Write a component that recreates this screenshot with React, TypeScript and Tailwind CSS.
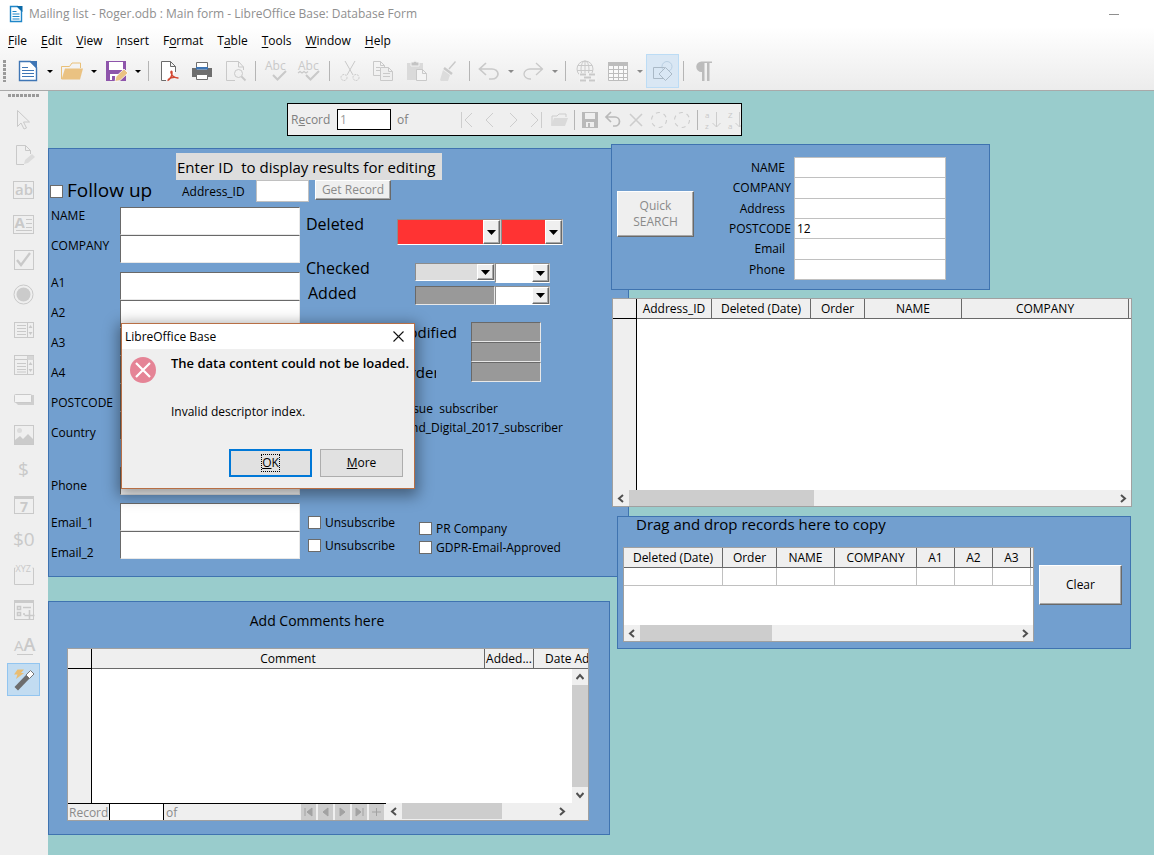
import type { ReactNode } from "react";

/* ---------- toolbar icons (24 x 24 grid) ---------- */

function Icon({ children, size = 24 }: { children: ReactNode; size?: number }) {
  return (
    <svg width={size} height={size} viewBox="0 0 24 24" fill="none" stroke="#c9c9c9" strokeWidth="1" aria-hidden="true" className="shrink-0 overflow-visible">
      {children}
    </svg>
  );
}

const glyph = { stroke: "none", fill: "#c9c9c9", fontFamily: "'Open Sans', sans-serif" };

const WriterDoc = () => (
  <Icon>
    <path d="M3.500 2.500h11l6 6v13h-17z" stroke="#3f76b5" strokeWidth="1.400" fill="#fff" />
    <path d="M13 2h8v8z" fill="#3f76b5" stroke="none" />
    <path d="M6 8.500h6M6 11.500h12M6 14.500h12M6 17.500h12" stroke="#3f76b5" strokeWidth="1.100" />
  </Icon>
);

const BaseDoc = () => (
  <svg width="14" height="18" viewBox="0 0 14 18" aria-hidden="true" className="shrink-0">
    <path d="M1.500 1.500h7l4 4v11h-11z" fill="#fff" stroke="#1f86c8" strokeWidth="1.400" />
    <path d="M7.500 1h6v6z" fill="#0b6aa8" />
    <path d="M3.500 6.500h4M3.500 9h7M3.500 11.500h7M3.500 14h7" stroke="#1f86c8" strokeWidth="1.200" />
  </svg>
);

const FolderIcon = () => (
  <Icon>
    <path d="M1.500 20V7.500h8l2.500-3.500h8.500v5" stroke="#e9c078" />
    <path d="M5 9.500h18l-3 11H1.500z" fill="#eac282" stroke="none" />
  </Icon>
);

const SaveIcon = () => (
  <Icon>
    <path d="M2 2h20v20H2z" fill="#8e55ab" stroke="none" />
    <path d="M5 3h14v8H5zM6 15h10v6H6z" fill="#fff" stroke="none" />
    <path d="M8 17h3v5H8z" fill="#8e55ab" stroke="none" />
    <path d="M11 22.500l1-5 8-7.500 4 4-8 7.500z" fill="#eac282" stroke="#fff" strokeWidth=".8" />
  </Icon>
);

const PdfIcon = () => (
  <Icon>
    <path d="M9 21.500H4.500v-19h9l5 5V13M13.500 2.500v5h5" stroke="#6b6b6b" fill="#fff" />
    <path d="M10.500 21.500c3-1.500 5-5.500 4.500-8.500-.3-1.500-1.500-.8-1 .8.800 3 3.500 5.200 7.500 5.200M11 20.500c3-2 7-2.500 10-1.500" stroke="#d2452f" strokeWidth="1.400" />
  </Icon>
);

const PrintIcon = () => (
  <Icon>
    <path d="M2 9h20v9H2z" fill="#6e6e6e" stroke="none" />
    <path d="M6.500 3.500h11V11h-11z" fill="#fff" stroke="#6e6e6e" />
    <path d="M6 8h12v2.500H6z" fill="#3f76b5" stroke="none" />
    <path d="M6.500 15.500h11v5h-11z" fill="#fff" stroke="#6e6e6e" />
  </Icon>
);

const PreviewIcon = () => (
  <Icon>
    <path d="M20.500 11V8l-5-5.500h-12v19H12M15.500 2.500V8h5" />
    <circle cx="15.500" cy="14.500" r="4" />
    <path d="M18.500 17.500l4 4" strokeWidth="1.800" />
  </Icon>
);

const SpellIcon = ({ wavy = false }: { wavy?: boolean }) => (
  <Icon>
    <text x="1" y="11" fontSize="12" {...glyph}>Abc</text>
    {wavy && <path d="M1 14l2-1.500 2 1.500 2-1.500 2 1.500 2-1.500" strokeWidth="1.300" />}
    <path d="M9 16l4.500 4.500L22 12" strokeWidth="2" />
  </Icon>
);

const CutIcon = () => (
  <Icon>
    <path d="M7 2l8 14M17 2L9 16" />
    <circle cx="6" cy="18.500" r="3" strokeDasharray="2 1" />
    <circle cx="18" cy="18.500" r="3" strokeDasharray="2 1" />
  </Icon>
);

const CopyIcon = () => (
  <Icon>
    <path d="M9 16.500H2.500v-14h7l4 4V8M9.500 2.500v4h4M5 8.500h4M5 11.500h4" />
    <path d="M9.500 8.500h8l4 4v9h-12zM17.500 8.500v4h4M12 14.500h7M12 17.500h7" fill="#eee" />
  </Icon>
);

const PasteIcon = () => (
  <Icon>
    <path d="M3 4h16v17H3z" fill="#dadada" stroke="none" />
    <path d="M7 4V3h2.500a1.800 1.800 0 013 0H15v4H7z" fill="#c4c4c4" stroke="#f2f2f2" />
    <path d="M12.500 10.500h6l4 4v7h-10zM18.500 10.500v4h4" fill="#f4f4f4" />
  </Icon>
);

const BrushIcon = () => (
  <Icon>
    <path d="M18.500 2.500L12 10" strokeWidth="1.400" />
    <path d="M7 9l8 6" strokeWidth="2.500" />
    <path d="M6 11l7 5-2 6H4l-1-1z" fill="#dcdcdc" stroke="none" />
  </Icon>
);

const UndoIcon = () => (
  <Icon>
    <path d="M9 4L2.500 10 9 16M2.500 10H15a6 5 0 010 10h-3" strokeWidth="1.700" />
  </Icon>
);

const RedoIcon = () => (
  <Icon>
    <path d="M15 4l6.500 6-6.500 6M21.500 10H9a6 5 0 000 10h1" strokeWidth="1.300" />
  </Icon>
);

const LinkIcon = () => (
  <Icon>
    <circle cx="11" cy="10" r="8" />
    <ellipse cx="11" cy="10" rx="4" ry="8" />
    <path d="M4 6.500h14M3 11.500h16M11 2v14" />
    <path d="M5 14h18v9H5z" fill="#f2f2f2" stroke="none" />
    <path d="M6 15.500h6M15 15.500h6M10 18.500h7M6 21.500h6M15 21.500h6" strokeWidth="1.800" />
  </Icon>
);

const TableIcon = () => (
  <Icon>
    <path d="M2.500 3.500h19v18h-19zM2.500 10.500h19M2.500 14.500h19M2.500 18.500h19M7.500 6v15M12.500 6v15M17.500 6v15" stroke="#bdbdbd" fill="#fafafa" />
    <path d="M2 3h20v4H2z" fill="#bdbdbd" stroke="none" />
  </Icon>
);

const ShapesIcon = () => (
  <Icon>
    <circle cx="16" cy="7.500" r="5" stroke="#b9cfe2" />
    <path d="M2.500 8.500h11v11h-11z" stroke="#aab9c6" />
    <path d="M14.500 8.500l6.500 6.500-6.500 6.500L8 15z" stroke="#aab9c6" fill="#d9e7f4" />
  </Icon>
);

const PilcrowIcon = () => (
  <Icon>
    <path d="M20 2.500H9.500a5 5 0 000 10.500H10v9h2.500V4H15v18h2.500V4H20z" fill="#bcbcbc" stroke="none" />
  </Icon>
);

/* ---------- form control palette ---------- */

const palette: { label: string; icon: ReactNode; active?: boolean }[] = [
  { label: "Select", icon: <Icon><path d="M5.500 2.500l12 11.500h-6l3 6-2.500 1-3-6-3.500 3.500z" /></Icon> },
  {
    label: "Design Mode",
    icon: (
      <Icon>
        <path d="M18.500 11V7.500l-5-5h-9v19H12M13.500 2.500v5h5" />
        <path d="M12 21l1-4 7-6 3 3-7 6z" fill="#dcdcdc" stroke="none" />
      </Icon>
    ),
  },
  { label: "Label Field", icon: <Icon><rect x="1.500" y="3.500" width="20" height="17" /><text x="3" y="17" fontSize="15" fontWeight="600" {...glyph}>ab</text></Icon> },
  {
    label: "Text Box",
    icon: (
      <Icon>
        <rect x="1.500" y="2.500" width="20" height="18" />
        <text x="2.500" y="15" fontSize="15" fontWeight="700" {...glyph}>A</text>
        <path d="M14 6.500h6M14 10.500h6M14 14.500h6M4 17.500h16" strokeWidth="1.200" />
      </Icon>
    ),
  },
  { label: "Check Box", icon: <Icon><rect x="2.500" y="2.500" width="19" height="19" /><path d="M5 12l4 5 9-12" strokeWidth="2.300" /></Icon> },
  { label: "Option Button", icon: <Icon><circle cx="11.500" cy="11.500" r="9.500" /><circle cx="11.500" cy="11.500" r="7" fill="#cbcbcb" stroke="none" /></Icon> },
  {
    label: "List Box",
    icon: <Icon><rect x="2.500" y="4.500" width="19" height="15" /><path d="M15.500 4.500v15M5 7.500h9M5 10.500h9M5 13.500h9M5 16.500h9" /><path d="M16.500 10h4l-2-3zM16.500 14h4l-2 3z" fill="#c9c9c9" stroke="none" /></Icon>,
  },
  {
    label: "Combo Box",
    icon: <Icon><rect x="2.500" y="2.500" width="19" height="19" /><path d="M15.500 2.500v19M2.500 6.500h13M5 10.500h9M5 13.500h9M5 16.500h9M5 19h9" /><path d="M15.500 3h6v4h-6z" fill="#d6d6d6" stroke="none" /><path d="M16.500 12h4l-2-3zM16.500 16h4l-2 3z" fill="#c9c9c9" stroke="none" /></Icon>,
  },
  { label: "Push Button", icon: <Icon><path d="M5 7h17v10H6l-2-2z" fill="#cfcfcf" stroke="none" /><rect x="2.500" y="6.500" width="17" height="8" rx="1" fill="#f3f3f3" /></Icon> },
  { label: "Image Control", icon: <Icon><rect x="2.500" y="2.500" width="19" height="19" /><circle cx="7.500" cy="7.500" r="2.500" fill="#dcdcdc" stroke="none" /><path d="M3 21v-4l5-4 3 3 5-5 5 5v5z" fill="#cbcbcb" stroke="none" /></Icon> },
  { label: "Currency Field", icon: <Icon><text x="6" y="18" fontSize="19" {...glyph}>$</text></Icon> },
  { label: "Date Field", icon: <Icon><rect x="2.500" y="3.500" width="19" height="17" /><path d="M2 3h20v3H2z" fill="#cbcbcb" stroke="none" /><text x="8" y="19" fontSize="14" fontWeight="700" {...glyph}>7</text></Icon> },
  { label: "Formatted Field", icon: <Icon><text x="1" y="18" fontSize="19" {...glyph}>$0</text></Icon> },
  { label: "Group Box", icon: <Icon><path d="M3.500 5H2.500v16.500h19V5h-1" /><text x="3.500" y="9" fontSize="9" {...glyph}>XYZ</text></Icon> },
  {
    label: "More Controls",
    icon: <Icon><rect x="2.500" y="2.500" width="19" height="19" /><path d="M2 2h20v3H2z" fill="#cbcbcb" stroke="none" /><path d="M5.500 8.500h3v3h-3zM5.500 14.500h3v3h-3zM11 9.500h8M11 16h2M17.500 12v10M12.500 17.500h10" strokeWidth="1.600" /></Icon>,
  },
  { label: "Form Design", icon: <Icon><text x="2" y="18" {...glyph}><tspan fontSize="15">A</tspan><tspan fontSize="18" fontWeight="600">A</tspan></text><path d="M5 21.500h16" /></Icon> },
  {
    label: "Toggle Wizards",
    active: true,
    icon: (
      <Icon>
        <path d="M5.500 1.500H12L9 5h3l-8 6 1.500-4.500H2z" fill="#e9bd73" stroke="none" />
        <path d="M2.500 19L14 7l3.500 3.500L6 22.500z" fill="#6d6d6d" stroke="none" />
        <path d="M14 7l4.500-4.500L22 6l-4.500 4.500z" fill="#fff" stroke="#777" />
      </Icon>
    ),
  },
];

/* ---------- small shared pieces ---------- */

const Sep = () => (
  <span className="flex w-2 shrink-0 justify-center">
    <span className="h-5 w-px bg-[#b5b5b5]" />
  </span>
);

function Tool({ label, children, active = false, wide = true }: { label: string; children: ReactNode; active?: boolean; wide?: boolean }) {
  return (
    <button
      type="button"
      aria-label={label}
      className={`flex h-[34px] shrink-0 items-center justify-center ${wide ? "w-[33px]" : "w-8"} ${active ? "border border-[#bcdcf5] bg-[#d9e7f4]" : ""}`}
    >
      {children}
    </button>
  );
}

function DropArrow({ label, dim = false }: { label: string; dim?: boolean }) {
  return (
    <button type="button" aria-label={label} className="flex h-[34px] w-3 shrink-0 items-center justify-center">
      <svg width="6" height="3" viewBox="0 0 6 3" aria-hidden="true">
        <path d="M0 0h6L3 3z" fill={dim ? "#8a8a8a" : "#000"} />
      </svg>
    </button>
  );
}

const sunken = "border border-t-[#696969] border-l-[#696969] border-r-[#e8e8e8] border-b-[#e8e8e8]";
const raised = "border border-t-white border-l-white border-r-[#696969] border-b-[#696969] bg-[#efefef] shadow-[inset_-1px_-1px_0_#a8a8a8]";

function Combo({ label, box, fill }: { label: string; box: string; fill: string }) {
  return (
    <div className={`relative flex border border-t-[#8c8c8c] border-l-[#8c8c8c] border-r-[#c8c8c8] border-b-white ${box} ${fill}`}>
      <select aria-label={label} className="min-w-0 flex-1 appearance-none bg-transparent" />
      <span className={`pointer-events-none absolute inset-y-0 right-0 flex w-[17px] items-center justify-center ${raised}`}>
        <svg width="9" height="5" viewBox="0 0 9 5" aria-hidden="true">
          <path d="M0 0h9L4.500 5z" fill="#000" />
        </svg>
      </span>
    </div>
  );
}

const chevrons = { left: "M6 1L2 4.500 6 8", right: "M2 1l4 3.500L2 8", up: "M.500 6L4 2l3.500 4", down: "M.500 2L4 6l3.500-4" };

function ScrollArrow({ dir }: { dir: keyof typeof chevrons }) {
  return (
    <button type="button" aria-label={`Scroll ${dir}`} className="flex size-4 shrink-0 items-center justify-center">
      <svg width="8" height="9" viewBox="0 0 8 9" fill="none" stroke="#505050" strokeWidth="2" aria-hidden="true">
        <path d={chevrons[dir]} />
      </svg>
    </button>
  );
}

function HScroll({ thumb }: { thumb: string }) {
  return (
    <div className="flex h-4 min-w-0 flex-1 bg-[#efefef]">
      <ScrollArrow dir="left" />
      <div className="flex min-w-0 flex-1">
        <div className={`bg-[#cdcdcd] ${thumb}`} />
      </div>
      <ScrollArrow dir="right" />
    </div>
  );
}

function Check({ label, text = "text-xs", box = "" }: { label: string; text?: string; box?: string }) {
  return (
    <label className={`flex items-center gap-1 whitespace-nowrap ${text} ${box}`}>
      <input type="checkbox" className="size-[13px] shrink-0 appearance-none border border-[#6b6b6b] bg-white" />
      {label}
    </label>
  );
}

/* ---------- window chrome ---------- */

const menus: [string, string, string][] = [
  ["", "F", "ile"], ["", "E", "dit"], ["", "V", "iew"], ["", "I", "nsert"], ["F", "o", "rmat"],
  ["T", "a", "ble"], ["", "T", "ools"], ["", "W", "indow"], ["", "H", "elp"],
];

function Chrome() {
  return (
    <header className="border-b border-[#a9a9a9] bg-linear-to-b from-white from-30% to-[#ececec]">
      <div className="flex h-7 items-center gap-1.5 pr-[35px] pl-[9px] text-[#8f8f8f]">
        <BaseDoc />
        <h1 className="flex-1 text-xs">Mailing list - Roger.odb : Main form - LibreOffice Base: Database Form</h1>
        <button type="button" aria-label="Minimise" className="h-px w-2.5 bg-[#8f8f8f]" />
      </div>
      <nav className="flex h-[26px] items-center gap-3.5 pl-2">
        {menus.map(([a, key, b]) => (
          <button type="button" key={a + key + b}>
            {a}
            <u className="underline-offset-2">{key}</u>
            {b}
          </button>
        ))}
      </nav>
      <div className="flex h-9 items-start pl-[3px]">
        <span className="mt-1.5 mr-1.5 h-[22px] w-[3px] shrink-0 bg-[repeating-linear-gradient(#9a9a9a_0_3px,transparent_3px_4px)]" />
        <Tool label="New" wide={false}><WriterDoc /></Tool>
        <DropArrow label="New options" />
        <Tool label="Open" wide={false}><FolderIcon /></Tool>
        <DropArrow label="Open options" />
        <Tool label="Save" wide={false}><SaveIcon /></Tool>
        <DropArrow label="Save options" />
        <div className="flex h-[34px] items-center">
          <Sep />
          <Tool label="Export as PDF"><PdfIcon /></Tool>
          <Tool label="Print"><PrintIcon /></Tool>
          <Tool label="Print Preview"><PreviewIcon /></Tool>
          <Sep />
          <Tool label="Spelling"><SpellIcon /></Tool>
          <Tool label="Automatic Spell Checking"><SpellIcon wavy /></Tool>
          <Sep />
          <Tool label="Cut"><CutIcon /></Tool>
          <Tool label="Copy"><CopyIcon /></Tool>
          <Tool label="Paste"><PasteIcon /></Tool>
          <Tool label="Clone Formatting"><BrushIcon /></Tool>
          <Sep />
          <Tool label="Undo" wide={false}><UndoIcon /></Tool>
          <DropArrow label="Undo options" dim />
          <Tool label="Redo" wide={false}><RedoIcon /></Tool>
          <DropArrow label="Redo options" dim />
          <Sep />
          <Tool label="Hyperlink"><LinkIcon /></Tool>
          <Tool label="Table" wide={false}><TableIcon /></Tool>
          <DropArrow label="Table options" dim />
          <Tool label="Show Draw Functions" active><ShapesIcon /></Tool>
          <Sep />
          <Tool label="Formatting Marks"><PilcrowIcon /></Tool>
        </div>
      </div>
    </header>
  );
}

function Palette() {
  return (
    <aside className="w-12 shrink-0 bg-[#efefef] pt-[3px] pl-[7px]">
      <div className="mb-1.5 ml-px h-[3px] w-8 bg-[repeating-linear-gradient(90deg,#9a9a9a_0_3px,transparent_3px_4px)]" />
      <div className="flex flex-col gap-0.5">
        {palette.map((p) => (
          <button
            type="button"
            key={p.label}
            aria-label={p.label}
            className={`flex size-[33px] items-center justify-center ${p.active ? "border border-[#92c5f0] bg-[#c2dcf1]" : ""}`}
          >
            {p.icon}
          </button>
        ))}
      </div>
    </aside>
  );
}

/* ---------- record navigation bar ---------- */

function NavIcon({ label, children }: { label: string; children: ReactNode }) {
  return (
    <button type="button" aria-label={label} className="flex h-6 w-[23px] shrink-0 items-center justify-center">
      <svg width="20" height="20" viewBox="0 0 20 20" fill="none" stroke="#cdcdcd" aria-hidden="true" className="overflow-visible">
        {children}
      </svg>
    </button>
  );
}

function RecordBar() {
  return (
    <div className="ml-[239px] flex h-[33px] w-[455px] items-center overflow-hidden border border-black bg-[#efefef] text-[#808080]">
      <label htmlFor="record" className="w-[49px] shrink-0 pl-[3px]">R<u>e</u>cord</label>
      <input id="record" defaultValue="1" className="h-[21px] w-[54px] shrink-0 border border-black bg-white px-0.5 text-[#999]" />
      <span className="w-16 shrink-0 pl-1.5">of</span>
      <NavIcon label="First Record"><path d="M4.500 2v16M15 3L8 10l7 7" /></NavIcon>
      <NavIcon label="Previous Record"><path d="M13 3l-7 7 7 7" /></NavIcon>
      <NavIcon label="Next Record"><path d="M7 3l7 7-7 7" /></NavIcon>
      <NavIcon label="Last Record"><path d="M5 3l7 7-7 7M15.500 2v16" /></NavIcon>
      <NavIcon label="New Record"><path d="M3 15V6h5l2-2h7v3" /><path d="M5 8h14l-3 8H2z" fill="#dadada" stroke="none" /></NavIcon>
      <Sep />
      <NavIcon label="Save Record"><path d="M2 2h16v16H2z" fill="#b9b9b9" stroke="none" /><path d="M5 3h10v6H5zM6 12h8v5H6z" fill="#efefef" stroke="none" /><path d="M8 13h2v4H8z" fill="#b9b9b9" stroke="none" /></NavIcon>
      <NavIcon label="Undo Data Entry"><path d="M8 2L3 7l5 5M3 7h9a4.500 4.500 0 010 9h-2" stroke="#b9b9b9" strokeWidth="1.700" /></NavIcon>
      <NavIcon label="Delete Record"><path d="M4 4l12 12M16 4L4 16" strokeWidth="1.600" /></NavIcon>
      <NavIcon label="Refresh"><circle cx="10" cy="10" r="7.500" strokeDasharray="4 4" strokeWidth="1.100" /></NavIcon>
      <NavIcon label="Refresh Control"><circle cx="10" cy="10" r="7.500" strokeDasharray="4 4" strokeWidth="1.100" /></NavIcon>
      <Sep />
      <NavIcon label="Sort Ascending"><text x="2" y="8" fontSize="8" {...glyph}>a</text><text x="2" y="19" fontSize="8" {...glyph}>z</text><path d="M13.500 2v15M9.500 13l4 4 4-4" /></NavIcon>
      <NavIcon label="Sort Descending"><text x="2" y="8" fontSize="8" {...glyph}>Z</text><text x="2" y="19" fontSize="8" {...glyph}>a</text><path d="M13.500 2v15M9.500 13l4 4 4-4" /></NavIcon>
    </div>
  );
}

/* ---------- address form ---------- */

const addressFields = [
  { label: "NAME", lead: "", space: "" },
  { label: "COMPANY", lead: "", space: "" },
  { label: "A1", lead: "mt-[7px]", space: "mt-[9px]" },
  { label: "A2", lead: "", space: "" },
  { label: "A3", lead: "", space: "" },
  { label: "A4", lead: "", space: "" },
  { label: "POSTCODE", lead: "", space: "" },
  { label: "Country", lead: "", space: "" },
  { label: "Phone", lead: "mt-[23px]", space: "mt-[27px]" },
  { label: "Email_1", lead: "mt-[7px]", space: "mt-2" },
  { label: "Email_2", lead: "", space: "" },
];

const panel = "border border-[#3f73b0] bg-[#729fcf]";

function AddressForm() {
  return (
    <section className={`w-[581px] pt-1 pb-2 ${panel}`}>
      <h2 className="ml-[127px] h-[27px] w-[266px] bg-[#dddddd] px-px text-[15px] leading-[28px] whitespace-pre">Enter ID  to display results for editing</h2>
      <div className="flex h-[22px] items-start">
        <Check label="Follow up" text="text-[19px]" box="h-[22px] w-[133px] pl-px" />
        <label htmlFor="address-id" className="w-[74px] leading-6">Address_ID</label>
        <input id="address-id" className="h-[22px] w-[53px] border border-[#c0c0c0] bg-white" />
        <button type="button" className={`ml-1.5 h-5 w-[76px] leading-[18px] text-[#8a8a8a] ${raised}`}>Get Record</button>
      </div>
      <div className="flex">
        <div className="-mt-px flex w-[71px] flex-col pl-0.5">
          {addressFields.map((f) => (
            <label key={f.label} htmlFor={f.label} className={`h-[30px] leading-[30px] ${f.lead}`}>{f.label}</label>
          ))}
        </div>
        <div className="flex w-[180px] flex-col pt-[5px]">
          {addressFields.map((f) => (
            <input key={f.label} id={f.label} className={`h-7 w-full bg-white ${sunken} ${f.space}`} />
          ))}
        </div>
        <div className="ml-1.5 flex flex-1 flex-col pt-[17px]">
          <div className="flex h-[26px] items-start">
            <span className="w-[91px] text-base leading-[10px]">Deleted</span>
            <Combo label="Deleted by" box="h-[26px] w-[104px]" fill="bg-[#ff3333]" />
            <Combo label="Deleted date" box="h-[26px] w-[62px]" fill="bg-[#ff3333]" />
          </div>
          <div className="mt-[18px] flex h-5 items-start">
            <span className="w-[109px] text-base leading-[10px]">Checked</span>
            <Combo label="Checked by" box="h-[18px] w-20" fill="bg-[#dddddd]" />
            <Combo label="Checked date" box="h-5 w-[55px]" fill="bg-white" />
          </div>
          <div className="mt-[3px] flex h-[19px] items-start">
            <span className="w-[109px] pl-0.5 text-base leading-[14px]">Added</span>
            <input aria-label="Added by" className={`h-[19px] w-20 bg-[#999999] ${sunken}`} />
            <Combo label="Added date" box="h-[19px] w-[55px]" fill="bg-white" />
          </div>
          <div className="mt-[17px] flex text-[15px] leading-5">
            <div className="flex w-[165px] flex-col justify-between">
              <span className="w-[151px] text-right">Modified</span>
              <span className="w-[130px] overflow-hidden pl-[92px]">Order</span>
            </div>
            <div className="flex w-[70px] flex-col">
              <input aria-label="Modified by" className={`h-5 bg-[#999999] ${sunken}`} />
              <input aria-label="Modified date" className={`h-5 bg-[#999999] ${sunken}`} />
              <input aria-label="Order" className={`h-5 bg-[#999999] ${sunken}`} />
            </div>
          </div>
          <div className="mt-[17px] leading-[19px] whitespace-pre">
            <p className="w-48 text-right">Issue  subscriber</p>
            <p className="w-[257px] text-right">Print_and_Digital_2017_subscriber</p>
          </div>
          <div className="mt-[74px] flex">
            <div className="w-[113px] pl-0.5">
              <Check label="Unsubscribe" box="h-[23px]" />
              <Check label="Unsubscribe" box="h-[23px]" />
            </div>
            <div className="pt-2">
              <Check label="PR Company" box="h-[19px]" />
              <Check label="GDPR-Email-Approved" box="h-[19px]" />
            </div>
          </div>
        </div>
      </div>
    </section>
  );
}

/* ---------- quick search ---------- */

const searchFields = [
  { label: "NAME", pad: "pr-[9px]" },
  { label: "COMPANY", pad: "pr-[3px]" },
  { label: "Address", pad: "pr-[9px]" },
  { label: "POSTCODE", pad: "pr-[3px]", value: "12" },
  { label: "Email", pad: "pr-[9px]" },
  { label: "Phone", pad: "pr-[9px]" },
];

function QuickSearch() {
  return (
    <section className={`flex h-[146px] w-[379px] items-start pt-3 pl-[5px] ${panel}`}>
      <button type="button" className={`mt-[34px] h-[46px] w-[77px] text-xs leading-4 text-[#8a8a8a] ${raised}`}>
        Quick
        <br />
        SEARCH
      </button>
      <div className="flex h-[123px] w-[100px] flex-col justify-around pt-px text-right">
        {searchFields.map((f) => (
          <label key={f.label} htmlFor={`q-${f.label}`} className={`leading-5 ${f.pad}`}>{f.label}</label>
        ))}
      </div>
      <div className="flex h-[123px] w-[152px] flex-col gap-px border border-[#c0c0c0] bg-[#c0c0c0]">
        {searchFields.map((f) => (
          <input key={f.label} id={`q-${f.label}`} defaultValue={f.value} className="min-h-0 flex-1 bg-white px-0.5" />
        ))}
      </div>
    </section>
  );
}

/* ---------- data grids ---------- */

const th = "h-5 overflow-hidden border-r border-b border-[#696969] p-0 font-normal whitespace-nowrap";
const corner = "border-r border-b border-black p-0";
const grid = "border border-[#a0a0a0] bg-white";

function ResultsGrid() {
  return (
    <section className={`ml-px ${grid}`}>
      <table className="w-full table-fixed border-separate border-spacing-0">
        <thead>
          <tr className="bg-[#efefef]">
            <th className={`w-6 ${corner}`} aria-label="Row" />
            <th className={`w-[75px] ${th}`}>Address_ID</th>
            <th className={`w-[99px] ${th}`}>Deleted (Date)</th>
            <th className={`w-[54px] ${th}`}>Order</th>
            <th className={`w-[97px] ${th}`}>NAME</th>
            <th className={th}>COMPANY</th>
            <th className="w-0.5 border-b border-[#696969] p-0" aria-label="More" />
          </tr>
        </thead>
        <tbody>
          <tr>
            <td className="h-[171px] border-r border-black bg-[#efefef] p-0" />
            <td colSpan={6} />
          </tr>
        </tbody>
      </table>
      <div className="flex">
        <HScroll thumb="w-[38%]" />
      </div>
    </section>
  );
}

const copyColumns = [
  { label: "Deleted (Date)", width: "w-[99px]" },
  { label: "Order", width: "w-[54px]" },
  { label: "NAME", width: "w-[58px]" },
  { label: "COMPANY", width: "w-[82px]" },
  { label: "A1", width: "w-[38px]" },
  { label: "A2", width: "w-[38px]" },
  { label: "A3", width: "w-[38px]" },
];

function CopyPanel() {
  return (
    <section className={`mt-[9px] mr-px ml-1.5 h-[133px] pl-[5px] ${panel}`}>
      <h2 className="h-[18px] pl-[13px] text-[15px] leading-[14px]">Drag and drop records here to copy</h2>
      <div className="mt-3 flex items-start">
        <div className={`w-[411px] shrink-0 ${grid}`}>
          <table className="w-full table-fixed border-separate border-spacing-0">
            <thead>
              <tr className="bg-[#efefef]">
                {copyColumns.map((c) => (
                  <th key={c.label} className={`${th} ${c.width}`}>{c.label}</th>
                ))}
                <th className="border-b border-[#696969] p-0" aria-label="More" />
              </tr>
            </thead>
            <tbody>
              <tr>
                {copyColumns.map((c) => (
                  <td key={c.label} className="h-[18px] border-r border-b border-[#c0c0c0] p-0" />
                ))}
                <td className="border-b border-[#c0c0c0] p-0" />
              </tr>
            </tbody>
          </table>
          <div className="h-[39px]" />
          <div className="flex">
            <HScroll thumb="w-[35%]" />
          </div>
        </div>
        <button type="button" className={`mt-[18px] ml-[5px] h-10 w-[83px] ${raised}`}>Clear</button>
      </div>
    </section>
  );
}

const recordButtons = [
  { label: "First record", path: "M4 3v8M11 3v8L6 7z" },
  { label: "Previous record", path: "M10 3v8L5 7z" },
  { label: "Next record", path: "M5 3v8l5-4z" },
  { label: "Last record", path: "M4 3v8l5-4zM11 3v8" },
  { label: "New record", path: "M3 7h9M7.500 3v8" },
];

function CommentsPanel() {
  return (
    <section className={`mt-6 h-[234px] w-[562px] px-[18px] pt-2 ${panel}`}>
      <h2 className="pr-6 text-center text-sm leading-[22px]">Add Comments here</h2>
      <div className={`mt-4 w-[522px] ${grid}`}>
        <table className="w-full table-fixed border-separate border-spacing-0">
          <thead>
            <tr className="bg-[#efefef]">
              <th className={`w-6 ${corner}`} aria-label="Row" />
              <th className={`w-[393px] ${th}`}>Comment</th>
              <th className={`w-[49px] ${th}`}>Added...</th>
              <th className="overflow-hidden border-b border-[#696969] p-0 pl-[11px] text-left font-normal whitespace-nowrap">Date Ad</th>
            </tr>
          </thead>
        </table>
        <div className="flex h-[134px]">
          <div className="w-6 border-r border-black bg-[#efefef]" />
          <div className="flex-1" />
          <div className="flex w-4 flex-col bg-[#efefef]">
            <ScrollArrow dir="up" />
            <div className="flex-1 bg-[#cdcdcd]" />
            <ScrollArrow dir="down" />
          </div>
        </div>
        <div className="flex h-[17px] bg-[#efefef]">
          <div className="flex w-[318px] shrink-0 border-t border-black text-[#8a8a8a]">
            <label htmlFor="comment-record" className="w-[41px] pl-px leading-[17px]">Record</label>
            <input id="comment-record" className="w-[55px] border-x border-black bg-white" />
            <span className="flex-1 pl-0.5 leading-[17px]">of</span>
            <span className="flex gap-0.5 pr-0.5">
              {recordButtons.map((b) => (
                <button type="button" key={b.label} aria-label={b.label} className="h-4 w-[15px] bg-[#cccccc]">
                  <svg width="15" height="14" viewBox="0 0 15 14" fill="#a2a2a2" stroke="#a2a2a2" aria-hidden="true">
                    <path d={b.path} />
                  </svg>
                </button>
              ))}
            </span>
          </div>
          <HScroll thumb="w-[66%]" />
          <div className="w-[18px] shrink-0" />
        </div>
      </div>
    </section>
  );
}

/* ---------- error dialog ---------- */

function ErrorDialog() {
  return (
    <div
      role="alertdialog"
      aria-labelledby="dialog-title"
      className="absolute top-[323px] left-[121px] z-20 w-[294px] border border-[#b86f45] bg-[#efefef] shadow-[0_4px_14px_3px_rgba(0,0,0,0.4)]"
    >
      <div className="flex h-[25px] items-center justify-between bg-white pr-2.5 pl-[3px]">
        <span id="dialog-title">LibreOffice Base</span>
        <button type="button" aria-label="Close">
          <svg width="11" height="11" viewBox="0 0 11 11" stroke="#111" strokeWidth="1.100" aria-hidden="true">
            <path d="M.500.500l10 10M10.500.500l-10 10" />
          </svg>
        </button>
      </div>
      <div className="flex gap-3.5 pt-[5px] pl-2">
        <svg width="27" height="27" viewBox="0 0 27 27" aria-hidden="true" className="mt-[2px] shrink-0">
          <circle cx="13" cy="14" r="13" fill="#e58496" />
          <path d="M6 7l14 14M20 7L6 21" stroke="#fff" strokeWidth="2.200" />
        </svg>
        <div className="whitespace-nowrap">
          <p className="text-[13px] leading-[18px] font-semibold">The data content could not be loaded.</p>
          <p className="mt-[31px] leading-[18px]">Invalid descriptor index.</p>
        </div>
      </div>
      <div className="mt-7 flex justify-end gap-2 pr-[11px] pb-[11px]">
        <button type="button" className="flex h-7 w-[83px] items-center justify-center border-2 border-[#0078d7] bg-[#e1e1e1]">
          <span className="border border-dotted border-black leading-4"><u>O</u>K</span>
        </button>
        <button type="button" className="h-7 w-[83px] border border-[#adadad] bg-[#e1e1e1]"><u>M</u>ore</button>
      </div>
    </div>
  );
}

export default function App() {
  return (
    <div className="relative flex min-h-screen flex-col overflow-hidden bg-[#99cccc] font-['Open_Sans','Noto_Sans',sans-serif] text-xs text-black">
      <Chrome />
      <div className="flex flex-1">
        <Palette />
        <main className="min-w-0 flex-1 pt-3">
          <RecordBar />
          <div className="mt-2 flex items-start">
            <div className="w-[563px] shrink-0 pt-1">
              <AddressForm />
              <CommentsPanel />
            </div>
            <div className="relative z-10 min-w-0 flex-1 pr-[22px]">
              <QuickSearch />
              <div className="mt-2">
                <ResultsGrid />
              </div>
              <CopyPanel />
            </div>
          </div>
        </main>
      </div>
      <ErrorDialog />
    </div>
  );
}
